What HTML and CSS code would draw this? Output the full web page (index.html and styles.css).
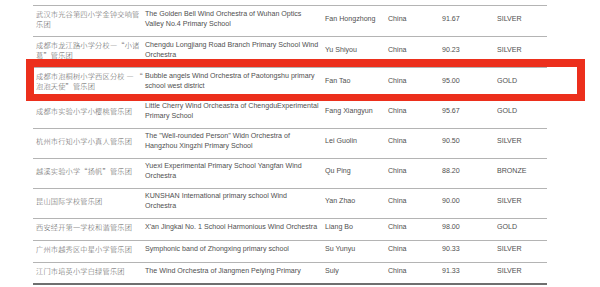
FILE: index.html
```html
<!DOCTYPE html>
<html lang="zh">
<head>
<meta charset="utf-8">
<title>Results</title>
<link rel="stylesheet" href="styles.css">
</head>
<body>
<div class="page">
  <div class="table">
    <div class="row h31">
      <div class="c zh">武汉市光谷第四小学金钟交响管<br>乐团</div>
      <div class="c en">The Golden Bell Wind Orchestra of Wuhan Optics<br>Valley No.4 Primary School</div>
      <div class="c">Fan Hongzhong</div>
      <div class="c">China</div>
      <div class="c">91.67</div>
      <div class="c">SILVER</div>
    </div>
    <div class="row h31">
      <div class="c zh">成都市龙江路小学分校—“小诸<br>葛”管乐团</div>
      <div class="c en">Chengdu Longjiang Road Branch Primary School Wind<br>Orchestra</div>
      <div class="c">Yu Shiyou</div>
      <div class="c">China</div>
      <div class="c">90.23</div>
      <div class="c">SILVER</div>
    </div>
    <div class="row h31">
      <div class="c zh">成都市泡桐树小学西区分校 — “<br>泡泡天使”管乐团</div>
      <div class="c en">Bubble angels Wind Orchestra of Paotongshu primary<br>school west district</div>
      <div class="c">Fan Tao</div>
      <div class="c">China</div>
      <div class="c">95.00</div>
      <div class="c">GOLD</div>
    </div>
    <div class="row h30">
      <div class="c zh">成都市实验小学小樱桃管乐团</div>
      <div class="c en">Little Cherry Wind Orcheastra of ChengduExperimental<br>Primary School</div>
      <div class="c">Fang Xiangyun</div>
      <div class="c">China</div>
      <div class="c">95.67</div>
      <div class="c">GOLD</div>
    </div>
    <div class="row h30">
      <div class="c zh">杭州市行知小学小真人管乐团</div>
      <div class="c en">The "Well-rounded Person" Widn Orchestra of<br>Hangzhou Xingzhi Primary School</div>
      <div class="c">Lei Guolin</div>
      <div class="c">China</div>
      <div class="c">90.50</div>
      <div class="c">SILVER</div>
    </div>
    <div class="row h30">
      <div class="c zh">越溪实验小学“扬帆”管乐团</div>
      <div class="c en">Yuexi Experimental Primary School Yangfan Wind<br>Orchestra</div>
      <div class="c">Qu Ping</div>
      <div class="c">China</div>
      <div class="c">88.20</div>
      <div class="c">BRONZE</div>
    </div>
    <div class="row h30">
      <div class="c zh">昆山国际学校管乐团</div>
      <div class="c en">KUNSHAN International primary school Wind<br>Orchestra</div>
      <div class="c">Yan Zhao</div>
      <div class="c">China</div>
      <div class="c">90.00</div>
      <div class="c">SILVER</div>
    </div>
    <div class="row h22">
      <div class="c zh">西安经开第一学校和谐管乐团</div>
      <div class="c en">X'an Jingkai No. 1 School Harmonious Wind Orchestra</div>
      <div class="c">Liang Bo</div>
      <div class="c">China</div>
      <div class="c">98.00</div>
      <div class="c">GOLD</div>
    </div>
    <div class="row h22">
      <div class="c zh">广州市越秀区中星小学管乐团</div>
      <div class="c en">Symphonic band of Zhongxing primary school</div>
      <div class="c">Su Yunyu</div>
      <div class="c">China</div>
      <div class="c">90.33</div>
      <div class="c">SILVER</div>
    </div>
    <div class="row h21 last">
      <div class="c zh">江门市培英小学白绿管乐团</div>
      <div class="c en">The Wind Orchestra of Jiangmen Peiying Primary</div>
      <div class="c">Suly</div>
      <div class="c">China</div>
      <div class="c">91.33</div>
      <div class="c">SILVER</div>
    </div>
  </div>
  <div class="highlight"></div>
</div>
</body>
</html>
```

FILE: styles.css
```css
* { box-sizing: border-box; }
html, body { margin: 0; padding: 0; background: #ffffff; }
.page {
  position: relative;
  width: 600px;
  height: 287px;
  overflow: hidden;
  background: #ffffff;
}
.table {
  margin-left: 33px;
  padding-top: 5px;
  width: 514px;
}
.table .row:first-child { border-top: 1px solid #b4b4b4; }
.row {
  display: grid;
  grid-template-columns: 109px 180px 63px 54px 55px 53px;
  align-items: center;
  border-bottom: 1px solid #b4b4b4;
  padding: 2px 0 7px;
  font-family: "Liberation Sans", Arial, sans-serif;
  font-size: 7.1px;
  line-height: 10px;
  color: #505050;
}
.table .row:first-child { height: 32px; }
.h31 { height: 31px; }
.h30 { height: 30px; }
.h22 { height: 22px; padding-top: 1px; padding-bottom: 6px; }
.h21 { height: 21px; padding-top: 1px; padding-bottom: 6px; }
.row.last { border-bottom: 2px solid #6f6f6f; height: 22px; }
.c {
  padding-left: 3px;
  white-space: nowrap;
}
.zh {
  font-family: "Noto Sans CJK SC", "Noto Sans CJK JP", sans-serif;
  font-size: 7.2px;
  letter-spacing: 0.2px;
  font-weight: 300;
  color: #626262;
}
.highlight {
  position: absolute;
  left: 26px;
  top: 59px;
  width: 559px;
  height: 42px;
  border: 8px solid #ec2f1c;
  border-bottom-width: 7px;
}
```
